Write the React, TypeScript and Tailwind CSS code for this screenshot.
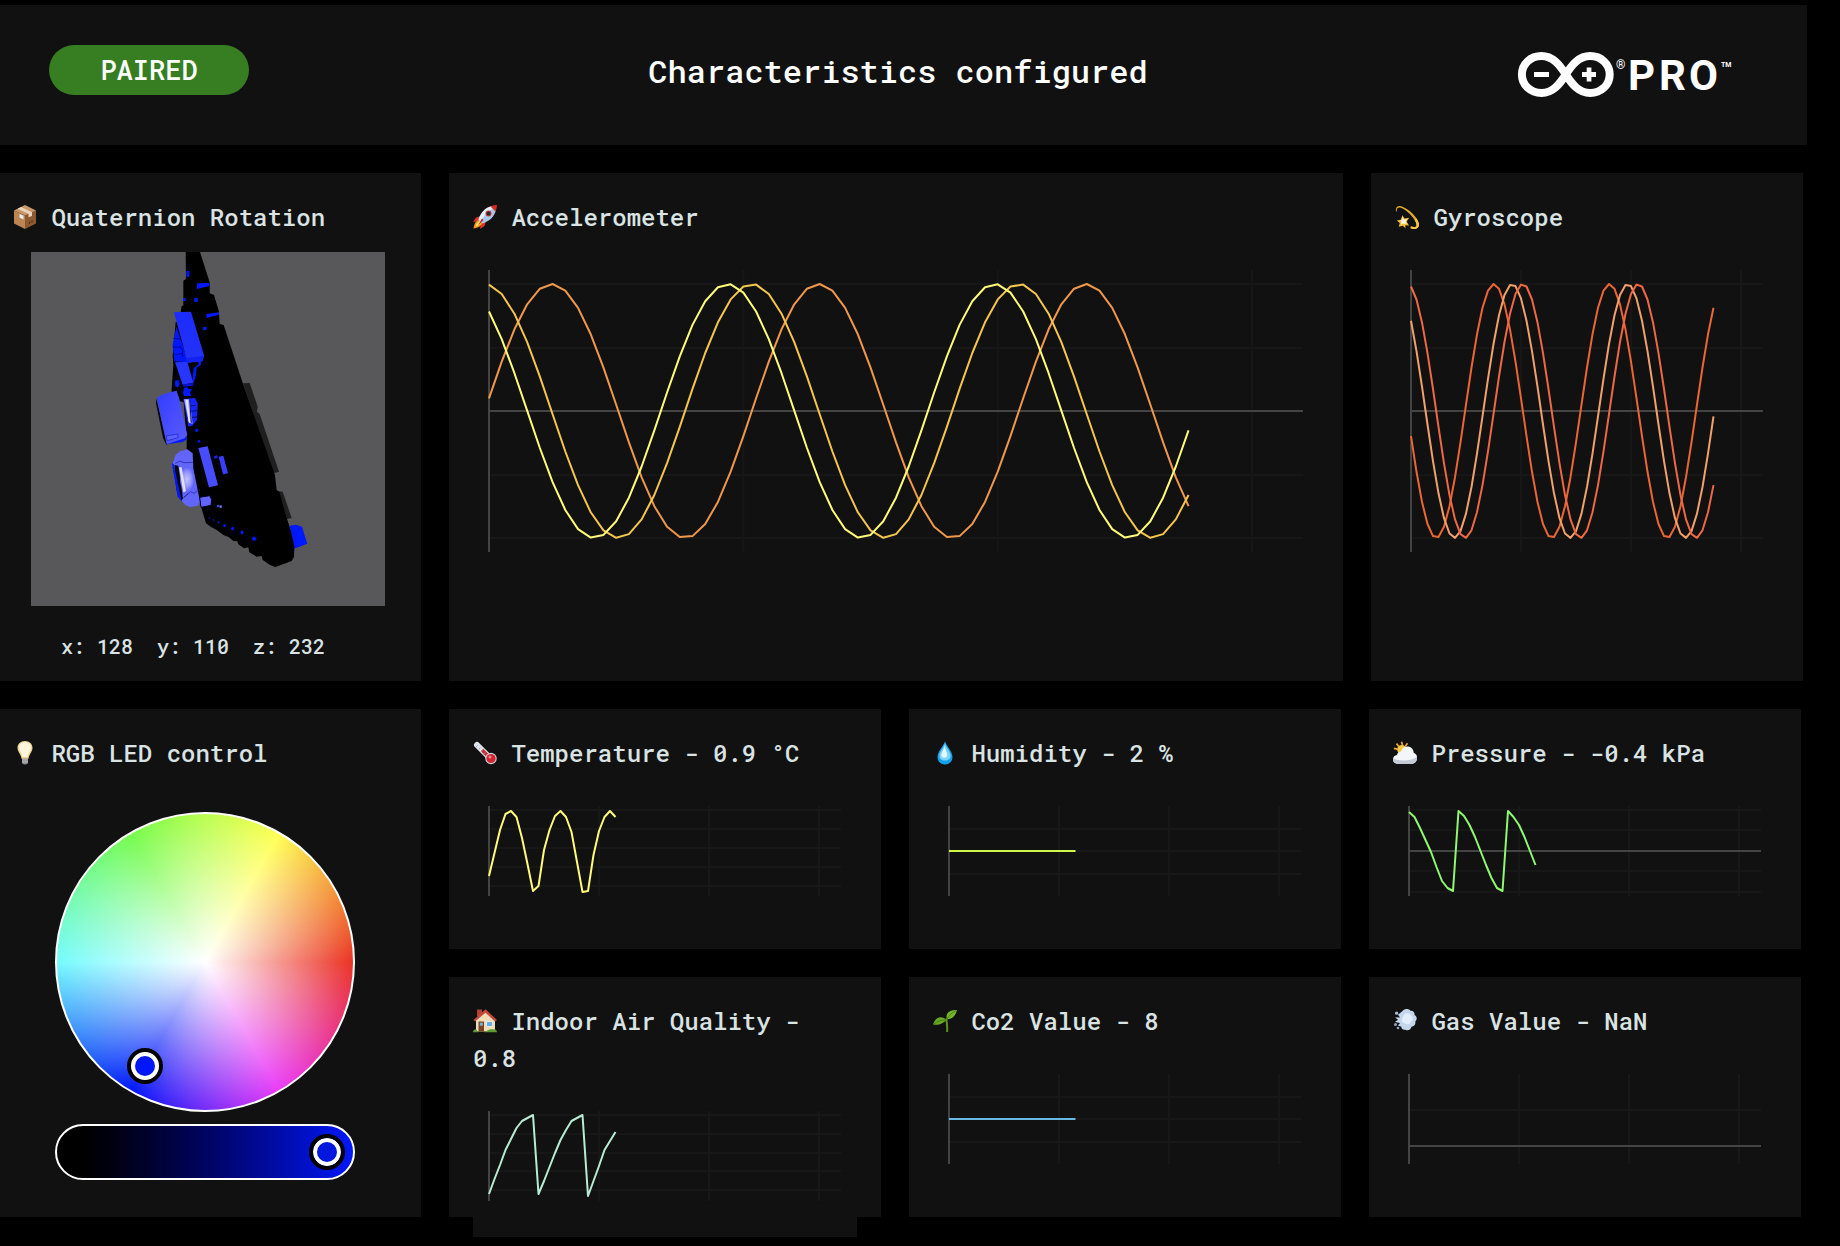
import React, { ReactNode, useState } from "react";

const SAMPLES = 64;
const STEP = (2 * Math.PI) / 21;

type Series = { color: string; values: number[] };

function wave(phase: number): number[] {
  return Array.from({ length: 56 }, (_, i) => 141 - 127 * Math.sin(i * STEP + phase));
}

const accelerometer: Series[] = [
  { color: "#f0984a", values: wave(0.1) },
  { color: "#f5c64c", values: wave(Math.PI / 2 + 0.1) },
  { color: "#fffc79", values: wave(Math.PI / 2 + 0.67) },
];

const gyroscope: Series[] = [
  { color: "#eb6632", values: wave(Math.PI + 0.2) },
  { color: "#f2a06c", values: wave(Math.PI / 2 + 0.78) },
  { color: "#ee6844", values: wave(Math.PI / 2 + 0.2) },
];

const temperature = [
  70, 47, 24, 8, 5, 11, 32, 58, 85, 80, 44, 24, 10, 5, 11, 26, 56, 86, 85, 49, 25, 11, 5, 11,
];
const pressure = [
  6, 11, 22, 34, 46, 61, 75, 82, 85, 5, 10, 19, 31, 45, 59, 72, 82, 85, 5, 11, 19, 31, 45, 59,
];
const airQuality = [
  83, 68, 54, 39, 28, 17, 10, 7, 4, 83, 70, 56, 42, 29, 19, 10, 7, 4, 85, 70, 55, 39, 30, 21,
];
const flat = Array.from({ length: 24 }, () => 45);

function Chart({
  label,
  tall = false,
  grid,
  zero,
  series,
}: {
  label: string;
  tall?: boolean;
  grid: number[];
  zero?: number;
  series: Series[];
}) {
  const height = tall ? 282 : 90;
  return (
    <div className="bg-[#111111] px-4 pt-[34px] pb-9">
      <svg
        role="img"
        aria-label={label}
        viewBox={`0 0 ${SAMPLES} ${height}`}
        preserveAspectRatio="none"
        className={tall ? "h-[282px] w-full overflow-visible" : "h-[90px] w-full overflow-visible"}
        fill="none"
        strokeWidth={2}
      >
        {grid.map((y) => (
          <line key={y} x1={0} x2={SAMPLES} y1={y} y2={y} stroke="#171717" vectorEffect="non-scaling-stroke" />
        ))}
        {[20, 40, 60].map((x) => (
          <line key={x} x1={x} x2={x} y1={0} y2={height} stroke="#171717" vectorEffect="non-scaling-stroke" />
        ))}
        {zero !== undefined && (
          <line x1={0} x2={SAMPLES} y1={zero} y2={zero} stroke="#444444" vectorEffect="non-scaling-stroke" />
        )}
        <line x1={0} x2={0} y1={0} y2={height} stroke="#444444" vectorEffect="non-scaling-stroke" />
        {series.map((s) => (
          <polyline
            key={s.color}
            points={s.values.map((y, i) => `${i},${y.toFixed(1)}`).join(" ")}
            stroke={s.color}
            strokeLinejoin="round"
            vectorEffect="non-scaling-stroke"
          />
        ))}
      </svg>
    </div>
  );
}

function Icon({ label, children }: { label: string; children: ReactNode }) {
  return (
    <svg role="img" aria-label={label} viewBox="0 0 24 24" className="inline-block size-6 align-[-3px]">
      {children}
    </svg>
  );
}

const PackageIcon = () => (
  <Icon label="Package">
    <path d="M1 5.5 12 10.5V24L1 18.5Z" fill="#bb8454" />
    <path d="M23 5.5 12 10.5V24l11-5.5Z" fill="#8c5a30" />
    <path d="M12 0 23 5.5 12 10.5 1 5.5Z" fill="#c9986a" />
    <path d="m8 2 11 5.3v3.6l-3.5 1.3V8.8L4.6 3.7Z" fill="#ead3ba" />
    <path d="m6.500 9 4 1.800v3.600l-4-1.800Z" fill="#e8eef4" />
    <path d="m16 17 1.200-.6v2l-1.200.6Zm2.400-1.200 1.200-.6v2l-1.200.6Z" fill="#4f3018" />
  </Icon>
);

const RocketIcon = () => (
  <Icon label="Rocket">
    <path d="M8 11 3 12.500 0 17l6-1Z" fill="#e0342a" />
    <path d="m13 16-1.500 5L7 24l1-6Z" fill="#e0342a" />
    <path d="M6.500 14.500C2 16 1 20 .5 23.500 4 23 8 22 9.500 17.500Z" fill="#f6921e" />
    <path d="M6.500 16C4 17 3 19.500 2.600 21.400 4.500 21 7 20 8 17.500Z" fill="#ffe45c" />
    <path d="M5.500 14.500C8 7.500 12 2.500 19.500 1l3.500 3.500C21.500 12 16.500 16 9.500 18.500Z" fill="#a9c8e8" />
    <path d="M5.500 14.500C8 7.500 12 2.500 19.500 1L21 2.500C15 6 11 11 7.500 16.500Z" fill="#e4effa" />
    <path d="M17.500 1.500C20 .4 22 .1 23.900.1c0 1.900-.3 3.900-1.400 6.400Z" fill="#d92b25" />
    <circle cx="15.500" cy="8.500" r="3" fill="#cc352d" />
    <circle cx="15.500" cy="8.500" r="1.900" fill="#1f2c3c" />
    <path d="m9 13.500 1.500 1.500-5.500 5.500Z" fill="#b92620" />
  </Icon>
);

const DizzyIcon = () => (
  <Icon label="Dizzy">
    <path
      d="M1 6.500C.2 2 3.200-.2 8 1.900c6.500 2.900 13.600 9.500 15.600 15.800 1.500 4.600-1.900 7.600-8.100 5.600l.4-1.700c4.200 1.200 6.400.2 5.400-3.100C19.500 13 13.500 6.500 7.600 3.400 3.600 1.400 1.400 2.700 1.800 6.500Z"
      fill="#e3a92a"
    />
    <path d="M23.600 17.700c1.500 4.600-1.900 7.600-8.100 5.600l.4-1.700c4.200 1.200 6.400.2 5.400-3.100-.4-1.300-1-2.500-1.700-3.700l1.700-1.600c1.100 1.500 1.900 3 2.300 4.500Z" fill="#f9c840" />
    <path
      d="m7.400 10.200 2.100 3.300 4.700-.7-2.500 3.600 2.300 4.200-3.700-.3.200 3-2.700-2.600-4 1 1-3.700-3-2.600 4-.7Z"
      fill="#f5be38"
    />
    <path d="m7.600 12 1.600 2.500 3.100-.4-1.700 2.300 1.200 2.500-3.200-.5-2.600 1 .6-2.600-1.500-1.400 2.100-.5Z" fill="#fff9e3" />
  </Icon>
);

const BulbIcon = () => (
  <Icon label="Light bulb">
    <path d="M12 0c-4.500 0-7.500 3-7.500 7 0 3.300 2.400 5 3.500 8.500L8.700 18h6.600l.7-2.500c1.100-3.500 3.500-5.200 3.500-8.500 0-4-3-7-7.500-7Z" fill="#f3d790" />
    <path d="M12 1C8.500 1 6 3.500 6 6.800c0 3 2.600 4.700 3.600 9.200h4.800c1-4.500 3.600-6.200 3.600-9.200C18 3.500 15.500 1 12 1Z" fill="#fff6dd" />
    <path d="M9 17.500h6v3.700c0 1.300-1.300 2.300-3 2.300s-3-1-3-2.300Z" fill="#8b8e92" />
    <path d="M9 18.900h6M9 20.900h6" stroke="#c7cacd" strokeWidth=".8" />
  </Icon>
);

const ThermometerIcon = () => (
  <Icon label="Thermometer">
    <path d="M4 4 17 17" stroke="#dfe5ec" strokeWidth="6" strokeLinecap="round" />
    <path d="m9 9 8 8" stroke="#c62b33" strokeWidth="3.400" />
    <circle cx="18" cy="17.500" r="5.700" fill="#c9d1da" />
    <circle cx="18" cy="17.500" r="4.600" fill="#d62330" />
    <circle cx="17" cy="16" r="1.500" fill="#f58a8f" />
    <path d="m3 6 2-2m.5 4.500 2-2M8 11l2-2m.5 4.500 2-2" stroke="#8f98a3" strokeWidth=".7" />
  </Icon>
);

const DropletIcon = () => (
  <Icon label="Droplet">
    <path d="M12 0c1.200 5 7.500 10 7.500 16.200 0 4.300-3.300 7.300-7.500 7.300s-7.500-3-7.500-7.300C4.500 10 10.800 5 12 0Z" fill="#13a0ea" />
    <path d="M12 2c.8 4.500 5.600 8.500 5.600 13 0 2.800-2.400 4.500-5.600 4.500S6.400 17.800 6.400 15C6.400 10.500 11.200 6.500 12 2Z" fill="#7fd3fa" />
    <path d="M11.600 4.500c.3 4 2.600 6.500 2.600 9.500 0 1.700-1.200 2.700-2.900 2.700s-2.900-1-2.900-2.700c0-3 2.900-5.500 3.200-9.500Z" fill="#e2f7ff" />
  </Icon>
);

const WeatherIcon = () => (
  <Icon label="Sun behind cloud">
    <path d="M8.500.8 9.500 4M3.500 2.600l2.200 2.700M.9 7.300l3.300.8M14.500 2.300l-2 2.700" stroke="#f0a92c" strokeWidth="1.700" />
    <circle cx="8.800" cy="8.600" r="4.700" fill="#f9c746" />
    <path d="M5 22.800c-2.900 0-5-1.700-5-4.400 0-2.400 1.700-4 4-4.300.2-2.200 1.800-3.500 3.800-3.400C9 7.300 11.300 5.500 14.300 5.500c3.800 0 6.200 2.700 6.400 6.300 2.200.8 3.400 2.600 3.400 5 0 3.500-2.300 6-5.600 6Z" fill="#f3f5f9" />
    <path d="M5 22.800c-2.900 0-5-1.700-5-4.400 0-.5.100-.9.200-1.300C3 20.500 20 20.500 24 15.500c.4 4-1.900 7.300-5.500 7.300Z" fill="#c5cad6" />
  </Icon>
);

const HouseIcon = () => (
  <Icon label="House">
    <path d="M4 .5h5V7H4Z" fill="#b5402f" />
    <path d="M3 10 12.500 2 22 10v12.500H3Z" fill="#efdcb8" />
    <path d="M12.500.2 24 11l-2 1.500-9.500-8.800L2 12.500.5 11Z" fill="#c5493a" />
    <path d="M5.500 12.500h5.500v10H5.500Z" fill="#7a4326" />
    <path d="M6.800 13.700h3v3h-3Z" fill="#6cb4de" />
    <path d="M13.500 12.500h6v5h-6Z" fill="#5fb0e6" stroke="#fbf3e0" strokeWidth=".8" />
    <path d="M0 23.300c0-2 1.400-3 3-3l2.500 3Zm24 0c0-2-1.400-3-3-3h-4l-6 3Z" fill="#5e9b32" />
  </Icon>
);

const SeedlingIcon = () => (
  <Icon label="Seedling">
    <path d="M13.200 9.500c.6 4 1.400 8.500.9 13.500" stroke="#5c9420" strokeWidth="2" fill="none" />
    <path d="M14 10.500C12 4.500 16 .700 24 .900 22.500 7 19 10 14 10.500Z" fill="#77b52b" />
    <path d="M13.500 10.700C9 6 2 8 0 15.500 6 16.500 11 14 13.500 10.700Z" fill="#69a825" />
    <path d="M14 10.300C16 6.500 19 3.500 23 1.500M13 10.800C9 11 4.500 12 1 15" stroke="#3f7414" strokeWidth=".8" fill="none" />
  </Icon>
);

const DashIcon = () => (
  <Icon label="Dashing away">
    <path
      d="M9.500 2C12-.7 16-.4 17.500 1.800c2.600-.4 4.500 1.800 4 4.200 2.700 1.300 2.900 4.800.8 6.400.6 3-1.300 5.200-3.800 5.300-.8 3.200-3.800 4.400-6.300 3-2 .5-3.900-.9-3.900-2.900L5 16.500l2-2.500-5-1 3-2.200-3-2.600 5 .3-2-2.800Z"
      fill="#c3d6ec"
    />
    <path d="M11 5.500c2.500-2.200 6-1.500 7.200 1 2 1.400 1.800 4.800-.2 6-.8 2.700-4.300 3.500-6.300 1.700-2.500-.7-3.500-2.700-2.700-4.500Z" fill="#e3eefa" />
    <circle cx="3.600" cy="4.200" r="1.600" fill="#a9bfd8" />
    <circle cx="2.500" cy="15.500" r="1.500" fill="#8fa7c4" />
    <circle cx="5" cy="19" r="1.300" fill="#8fa7c4" />
  </Icon>
);

function Title({ icon, children }: { icon: ReactNode; children: ReactNode }) {
  return (
    <h2 className="text-2xl leading-[37px] text-[#dae3e3]">
      {icon} {children}
    </h2>
  );
}

function Card({ small = false, children }: { small?: boolean; children: ReactNode }) {
  return (
    <section className={small ? "h-60 bg-[#111111] px-6 pt-[26px]" : "h-[508px] bg-[#111111] px-6 pt-[26px]"}>
      {children}
    </section>
  );
}

function ArduinoPro() {
  return (
    <svg
      role="img"
      aria-label="Arduino Pro"
      viewBox="0 0 213 45"
      className="h-[45px] w-[213px] overflow-visible"
      fill="#ffffff"
    >
      <path
        d="M47.800 22.500C41.500 12.500 34.500 4 23.500 4 12.500 4 3.900 12 3.900 22.500S12.500 41 23.500 41c11 0 18-8.500 24.300-18.500C54.100 12.500 61.100 4 72.100 4c11 0 19.600 8 19.600 18.500S83.100 41 72.100 41c-11 0-18-8.500-24.300-18.500Z"
        fill="none"
        stroke="#ffffff"
        strokeWidth="8"
      />
      <path d="M16 20h15v5H16Zm48 0h4.700v-4.500h4.700V20H78v5h-4.600v4.500h-4.700V25H64Z" />
      <text x="98" y="17" className="font-['Roboto'] text-[12px] font-medium">®</text>
      <text x="110 141 171" y="38" className="font-['Roboto'] text-[42px] font-bold">PRO</text>
      <text x="203" y="15" className="font-['Roboto'] text-[7px] font-bold">TM</text>
    </svg>
  );
}

function BoardScene() {
  return (
    <svg
      role="img"
      aria-label="Board orientation"
      viewBox="-327 21 1062 1062"
      className="aspect-square w-full bg-[#58585a]"
    >
      <defs>
        <linearGradient id="chip" x1="0" y1="0" x2="1" y2="1">
          <stop offset="0" stopColor="#333bff" />
          <stop offset="1" stopColor="#5a5dff" />
        </linearGradient>
        <linearGradient id="block" x1="0" y1="0" x2="0" y2="1">
          <stop offset="0" stopColor="#1a2cff" />
          <stop offset="1" stopColor="#2433f4" />
        </linearGradient>
        <radialGradient id="shine">
          <stop offset="0" stopColor="#c3c3ff" />
          <stop offset=".6" stopColor="#9797ff" />
          <stop offset="1" stopColor="#6266fa" />
        </radialGradient>
      </defs>
      <path d="M309 415 329 414 353 485 351 500 359 507 417 680 400 685Z" fill="#1f1f20" />
      <path d="m416 739 12 1 27 79-14 3Z" fill="#1f1f20" />
      <path d="m449 842 19-3 18 6 16 51-40 15Z" fill="#0018ff" />
      <path
        d="M137 21h43l29 91v33l13 5 15 50 2 37 12 3 58 176 96 275 5 44 8 5 24 85 10 30 11 48-1 32-7 13-49 18-16-6-22-15-3-12-15 2-22-13-3-15-13 3-17-12-3-9-12-1-14-12-16-6-20-15-18-10-14-10-12-40-46-183 0-30-9-110-36-10v-30l5-70-2-30 9-100 14-5 1-25 3-20h5v-75l8-5Z"
        fill="#000000"
      />
      <g fill="#0018ff">
        <path d="M139 78h9v17h-9ZM171 115l37-1v9l-37 9ZM129 159h8v9h-8ZM163 158h10v13h-10ZM199 207l38-5v7l-38 10ZM189 246h11v9h-11Z" />
        <path d="m109 245 36 107-42-3-5-50Z" />
        <path d="m185 345-3 15-12 8-4 32-10 20 5-50 15-12-3-10Z" />
        <path d="m105 407 10-2 4 12-5 11-8-4Zm27 22 9-3 5 7 10-2-6 12 4 10h-22l-3-10Z" />
        <path d="m80 598 0-15 55-10 7 8-14 10Z" />
        <circle cx="170" cy="556" r="5" />
        <circle cx="177" cy="589" r="4" />
        <path d="m96 655 10 2 19 112-12-15Z" />
        <circle cx="208" cy="819" r="2" />
        <circle cx="221" cy="825" r="2.500" />
        <circle cx="236" cy="832" r="3" />
        <circle cx="254" cy="842" r="4" />
        <circle cx="278" cy="851" r="5" />
        <path d="m300 861 7-5 5 7-7 6Zm36 17 8-4 6 8-6 6-8-4Z" />
      </g>
      <path d="m100 280 20 2m-22 24h26m-24 24 28-5m-10-20 10 8v24" stroke="#00059b" strokeWidth="3" fill="none" />
      <path d="m102 202 51-2 39 131-4 18-45 4Z" fill="url(#block)" />
      <path d="m142 339 49-7-3 15-45 6Z" fill="#1422ef" />
      <path d="m105 352 37-2 18 63-32 6Z" fill="#2635ff" />
      <path d="m128 418 33-4-3 9-28 2Z" fill="#0a13c8" />
      <path d="m49 460 33 136-2 5-11-22L48 475Z" fill="#090909" />
      <path d="m50 459 12-8 18-7 30-7 8 25 24 108-8 10-54 18Z" fill="url(#chip)" />
      <path d="m78 573 36-6v11l-32 9Z" fill="#5b60ff" stroke="#1620c0" strokeWidth="2" />
      <path d="m130 462 35-3 8 16-2 50-14 17-12 3Z" fill="#1726ff" />
      <path d="m132 463 17 0 9 73-11-2Z" fill="#a6a8ff" />
      <path d="m137 464 6 0 8 70-5-3Z" fill="#e8e8ff" />
      <path d="m149 463 5 70m-3-50 16-2m-13 18 17-2m-15 20 16-1" stroke="#060a70" strokeWidth="3" />
      <path d="m97 657 10-28 13-10 22-6 16 12 2 45 20 100-6 12-24 4-15-7-13-15Z" fill="#6165fa" />
      <path d="m103 660 12 2 14 98-5 8-14-34Z" fill="#080808" />
      <path d="m96 655 5 2 24 112-12-15Z" fill="#0018ff" />
      <ellipse cx="141" cy="703" rx="21" ry="36" fill="url(#shine)" />
      <path d="m117 667 8 0 13 72-8 3Z" fill="#e9e9ff" opacity=".9" />
      <path d="m106 655 14-7 12 5 28-1m-28 105 20-17 10 5 18-12m-50 25 14-12" stroke="#1a1e9a" strokeWidth="2" fill="none" />
      <path d="m170 610 8-1 29 113 23 1 1 6-27 1-16-15Z" fill="#060606" />
      <path d="m175 609 28-5 31 117-27 6Z" fill="#474dff" />
      <path d="m236 635 14-3 14 53-15 3Z" fill="#363fff" />
      <path d="m222 634 9-3 2 7-10 4Z" fill="#1724e8" />
      <path d="m179 757 30-5 6 12-2 17-30 6Z" fill="#6266ff" stroke="#00032e" strokeWidth="3" />
      <circle cx="234" cy="783" r="4" fill="#3c43e8" />
      <circle cx="242" cy="785" r="4" fill="#6b70e8" />
    </svg>
  );
}

function ColorPicker() {
  const [brightness, setBrightness] = useState(100);
  return (
    <div className="mt-10 ml-[42px] w-[300px]">
      <div className="relative aspect-square rounded-full border-2 border-white bg-[radial-gradient(closest-side,#ffffff,transparent),conic-gradient(from_90deg,#ea3323,#ea3df7,#0018f9,#75fbfd,#75fb4c,#ffff54,#ea3323)]">
        <button
          type="button"
          aria-label="Selected colour"
          className="absolute top-[234px] left-[70px] size-9 rounded-full border-4 border-black bg-white p-1"
        >
          <span className="block size-full rounded-full bg-[#0018f9]" />
        </button>
      </div>
      <input
        type="range"
        aria-label="Brightness"
        min={0}
        max={100}
        value={brightness}
        onChange={(e) => setBrightness(Number(e.target.value))}
        className="mt-3 block h-14 w-full appearance-none rounded-full border-2 border-white bg-linear-to-r from-black to-[#0018f9] px-2 [&::-webkit-slider-thumb]:size-9 [&::-webkit-slider-thumb]:appearance-none [&::-webkit-slider-thumb]:rounded-full [&::-webkit-slider-thumb]:border-4 [&::-webkit-slider-thumb]:border-solid [&::-webkit-slider-thumb]:border-black [&::-webkit-slider-thumb]:bg-[#0018dc] [&::-webkit-slider-thumb]:shadow-[inset_0_0_0_4px_#ffffff]"
      />
    </div>
  );
}

export default function App() {
  return (
    <div className="min-h-screen bg-black pt-[5px] pb-7 font-['Roboto_Mono','DejaVu_Sans_Mono',monospace] font-medium">
      <header className="mr-[33px] grid h-[140px] grid-cols-3 items-start bg-[#111111] pt-10 pr-[60px] pl-[49px]">
        <button type="button" className="h-[50px] w-[200px] rounded-full bg-[#377e22] text-[27px] text-white">
          PAIRED
        </button>
        <h1 className="justify-self-center pt-0.5 text-[32px] leading-[48px] whitespace-nowrap text-white">
          Characteristics configured
        </h1>
        <div className="mr-4 justify-self-end pt-[7px]">
          <ArduinoPro />
        </div>
      </header>

      <main className="mt-7 flex gap-7 pr-[37px]">
        <div className="flex w-[421px] shrink-0 flex-col gap-7">
          <section className="h-[508px] bg-[#111111] pt-[26px] pl-[13px]">
            <Title icon={<PackageIcon />}>Quaternion Rotation</Title>
            <div className="mt-4 mr-9 ml-[18px]">
              <BoardScene />
            </div>
            <p className="mt-[26px] ml-12 text-xl leading-7 whitespace-pre text-[#dae3e3]">
              {"x: 128  y: 110  z: 232"}
            </p>
          </section>
          <section className="h-[508px] bg-[#111111] pt-[26px] pl-[13px]">
            <Title icon={<BulbIcon />}>RGB LED control</Title>
            <ColorPicker />
          </section>
        </div>

        <div className="flex min-w-0 flex-1 flex-col gap-7">
          <div className="grid grid-cols-[894fr_432fr] gap-7">
            <Card>
              <Title icon={<RocketIcon />}>Accelerometer</Title>
              <Chart label="Accelerometer readings" tall grid={[14, 78, 205, 268]} zero={141} series={accelerometer} />
            </Card>
            <Card>
              <Title icon={<DizzyIcon />}>Gyroscope</Title>
              <Chart label="Gyroscope readings" tall grid={[14, 78, 205, 268]} zero={141} series={gyroscope} />
            </Card>
          </div>
          <div className="grid grid-cols-3 gap-7 pr-0.5">
            <Card small>
              <Title icon={<ThermometerIcon />}>Temperature - 0.9 °C</Title>
              <Chart
                label="Temperature readings"
                grid={[4, 23, 42, 61, 80]}
                series={[{ color: "#fffc79", values: temperature }]}
              />
            </Card>
            <Card small>
              <Title icon={<DropletIcon />}>Humidity - 2 %</Title>
              <Chart label="Humidity readings" grid={[23, 45, 68]} series={[{ color: "#d0f84a", values: flat }]} />
            </Card>
            <Card small>
              <Title icon={<WeatherIcon />}>Pressure - -0.4 kPa</Title>
              <Chart
                label="Pressure readings"
                grid={[4, 24, 65, 86]}
                zero={45}
                series={[{ color: "#8ef96d", values: pressure }]}
              />
            </Card>
            <Card small>
              <Title icon={<HouseIcon />}>Indoor Air Quality - 0.8</Title>
              <Chart
                label="Indoor air quality readings"
                grid={[4, 23, 42, 60, 79]}
                series={[{ color: "#b8ecd2", values: airQuality }]}
              />
            </Card>
            <Card small>
              <Title icon={<SeedlingIcon />}>Co2 Value - 8</Title>
              <Chart label="Co2 readings" grid={[23, 45, 68]} series={[{ color: "#67b8e3", values: flat }]} />
            </Card>
            <Card small>
              <Title icon={<DashIcon />}>Gas Value - NaN</Title>
              <Chart label="Gas readings" grid={[36]} zero={72} series={[]} />
            </Card>
          </div>
        </div>
      </main>
    </div>
  );
}
